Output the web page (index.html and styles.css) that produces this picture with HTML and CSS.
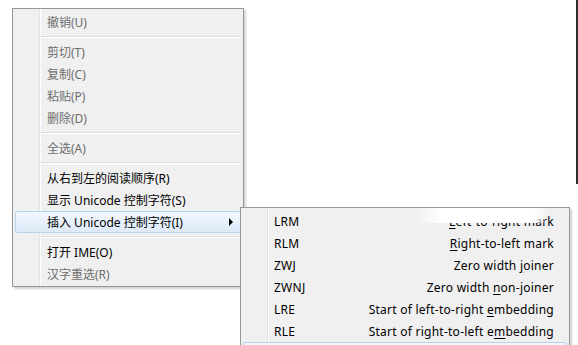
FILE: index.html
```html
<!DOCTYPE html>
<html lang="zh-CN">
<head>
    <meta charset="UTF-8">
    <title>右键菜单</title>
    <link rel="stylesheet" href="styles.css">
</head>
<body>
    <div class="desk">
        <div class="window-edge"></div>

        <div class="menu main-menu">
            <div class="item disabled">撤销(U)</div>
            <div class="sep"></div>
            <div class="item disabled">剪切(T)</div>
            <div class="item disabled">复制(C)</div>
            <div class="item disabled">粘贴(P)</div>
            <div class="item disabled">删除(D)</div>
            <div class="sep"></div>
            <div class="item disabled">全选(A)</div>
            <div class="sep"></div>
            <div class="item">从右到左的阅读顺序(R)</div>
            <div class="item">显示 Unicode 控制字符(S)</div>
            <div class="item active has-sub">插入 Unicode 控制字符(I)<span class="arrow"></span></div>
            <div class="sep"></div>
            <div class="item">打开 IME(O)</div>
            <div class="item disabled">汉字重选(R)</div>
        </div>

        <div class="menu sub-menu">
            <div class="item"><span class="code">LRM</span><span class="desc"><u>L</u>eft-to-right mark</span></div>
            <div class="item"><span class="code">RLM</span><span class="desc"><u>R</u>ight-to-left mark</span></div>
            <div class="item"><span class="code">ZWJ</span><span class="desc">Zero width <u>j</u>oiner</span></div>
            <div class="item"><span class="code">ZWNJ</span><span class="desc">Zero width <u>n</u>on-joiner</span></div>
            <div class="item"><span class="code">LRE</span><span class="desc">Start of left-to-right <u>e</u>mbedding</span></div>
            <div class="item"><span class="code">RLE</span><span class="desc">Start of right-to-left e<u>m</u>bedding</span></div>
            <div class="item active"></div>
            <div class="smear"></div>
        </div>
    </div>
</body>
</html>
```

FILE: styles.css
```css
html, body {
    margin: 0;
    padding: 0;
    background: #ffffff;
}
.desk {
    position: relative;
    width: 578px;
    height: 345px;
    overflow: hidden;
    font-family: "Segoe UI", "Noto Sans", "Noto Sans CJK SC", sans-serif;
    font-size: 12px;
    color: #000000;
}
.window-edge {
    position: absolute;
    left: 576px;
    top: 0;
    width: 2px;
    height: 184px;
    background: #2b2b2b;
}
.menu {
    position: absolute;
    box-sizing: border-box;
    background: #f0f0f0;
    border: 1px solid #979797;
    padding: 2px;
    box-shadow: 2px 2px 2px rgba(0, 0, 0, 0.18);
}
/* gutter line */
.menu::before {
    content: "";
    position: absolute;
    top: 0;
    bottom: 0;
    left: 26px;
    width: 1px;
    background: #e2e3e3;
    border-right: 1px solid #ffffff;
}
.main-menu {
    left: 12px;
    top: 8px;
    width: 232px;
    height: 279px;
}
.sub-menu {
    left: 240px;
    top: 207px;
    width: 330px;
    height: 170px;
}
.item {
    position: relative;
    display: flex;
    align-items: center;
    height: 22px;
    padding-left: 32px;
    padding-right: 15px;
    white-space: nowrap;
    border-radius: 3px;
    box-sizing: border-box;
}
.sub-menu .item {
    padding-left: 31px;
    padding-right: 13px;
    letter-spacing: 0.25px;
}
.item.disabled {
    color: #6d6d6d;
}
.item.active {
    background: linear-gradient(#f3f8fd, #dde9f8);
    box-shadow: inset 0 0 0 1px #b8d3f0;
}
.arrow {
    position: absolute;
    right: 8px;
    top: 7px;
    border-left: 4px solid #000000;
    border-top: 4px solid transparent;
    border-bottom: 4px solid transparent;
}
.code {
    flex: 1;
}
.desc u {
    text-underline-offset: 2px;
}
.sep {
    position: relative;
    height: 8px;
    margin-left: 25px;
}
.sep::after {
    content: "";
    position: absolute;
    left: 0;
    right: 0;
    top: 3px;
    height: 1px;
    background: #e0e0e0;
    border-bottom: 1px solid #ffffff;
}
.smear {
    position: absolute;
    left: 176px;
    top: 0;
    width: 132px;
    height: 15px;
    background: linear-gradient(90deg, rgba(255,255,255,0), #ffffff 18%, #ffffff 88%, rgba(255,255,255,0));
}
```
